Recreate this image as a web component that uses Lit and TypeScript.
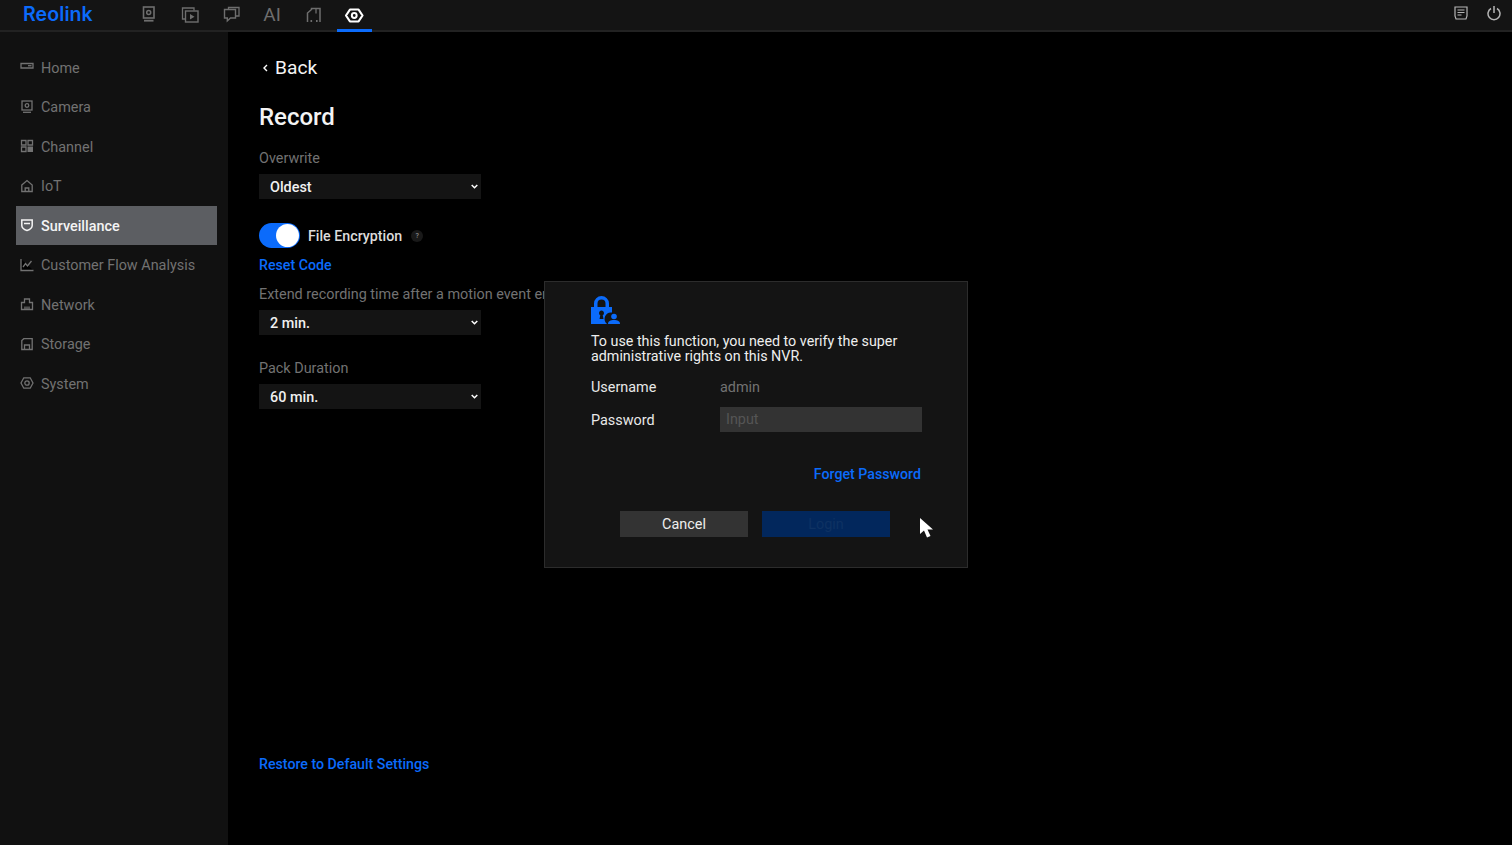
import { css, html, LitElement, svg } from 'lit';
import { customElement } from 'lit/decorators.js';

const topIcons = [
  svg`<rect x="4.5" y="3" width="10.500" height="11" fill="none" stroke-width="1.600"/><circle cx="9.700" cy="8.500" r="2" fill="none" stroke-width="1.500"/><path d="M5 16.700h9.500" stroke-width="1.800"/>`,
  svg`<path d="M14 6.500v-2.500H2.500v11h3" fill="none"/><rect x="5.500" y="7" width="12.500" height="11" fill="none" stroke-width="1.400"/><path d="M10 10v5.500l4.500-2.750z" fill="currentColor" stroke="none"/>`,
  svg`<path d="M7.500 5V3.500H18v8.500h-3.500" fill="none"/><path d="M3.500 5.500h11v8.500H9.500l-3.200 3v-3H3.500z" fill="none" stroke-width="1.400"/>`,
  null,
  svg`<path d="M4.500 18V9l4-3.500V4.500h8.500V18" fill="none" stroke-width="1.500"/><path d="M13 5v4.500" fill="none"/><path d="M7.500 17h1.600M13 17h1.600" stroke-width="1.800"/>`
];

const navIcons = [
  svg`<path d="M1 3.500h12v4.500H1z" fill="none"/><path d="M8 5.700h3.500"/>`,
  svg`<rect x="2" y="1" width="10" height="9" fill="none"/><circle cx="7" cy="5.500" r="1.800" fill="none"/><path d="M3 12.300h8"/>`,
  svg`<path d="M1.500 1.500h4.500v4.500h-4.500zM1.500 8h4.500v4.500h-4.500zM8 1.500h4.500v4.500H8z" fill="none"/><path d="M7.500 7.500H13V13H7.500z" fill="currentColor" stroke="none"/>`,
  svg`<path d="M1.800 6 7 1.500 12.200 6v6.500H1.800z" fill="none"/><path d="M5.200 12.500V9h3.600v3.500" fill="none"/>`,
  svg`<path d="M1.800 2h10.400v5.500c0 2.500-3 4.300-5.200 5-2.200-.7-5.200-2.500-5.200-5z" fill="none" stroke-width="1.500"/><path d="M4 5.500h6" stroke-width="1.500"/>`,
  svg`<path d="M1 1v11.500h12.500"/><path d="M3 9l2.500-3.500L7.500 8l4-5" fill="none"/>`,
  svg`<path d="M1.500 12.500V5.500h3V2h5v3.500h3v7z" fill="none"/><path d="M5 12.500V9.500M7 12.500V9.500M9 12.500V9.500"/>`,
  svg`<path d="M1.800 12.500v-9l2-1.800h8.400v10.800z" fill="none"/><path d="M4.500 12.500V8h5v4.500" fill="none"/>`,
  svg`<path d="M3.800 1.800h6.400L13 7l-2.800 5.200H3.800L1 7z" fill="none"/><circle cx="7" cy="7" r="2.200" fill="none"/>`
];

const navLabels = ['Home', 'Camera', 'Channel', 'IoT', 'Surveillance', 'Customer Flow Analysis', 'Network', 'Storage', 'System'];

@customElement('app-root')
export class AppRoot extends LitElement {
  static styles = css`
    :host {
      display: block;
      position: relative;
      width: 1512px;
      height: 845px;
      overflow: hidden;
      background: #000;
      color: #fff;
      font-family: Roboto, "Liberation Sans", sans-serif;
      font-size: 14.400px;
      letter-spacing: 0;
    }

    .topbar {
      display: flex;
      align-items: stretch;
      height: 30px;
      background: #141414;
      border-bottom: 2px solid #222;
    }

    .logo {
      width: 131px;
      flex: none;
      padding-left: 23px;
      box-sizing: border-box;
      color: #0b6bfb;
      font-family: Inter, sans-serif;
      font-size: 19.500px;
      font-weight: 600;
      line-height: 28px;
      letter-spacing: 0.100px;
    }

    .tabs {
      display: flex;
      gap: 6.200px;
    }

    .tab {
      display: flex;
      align-items: center;
      justify-content: center;
      width: 35px;
      height: 28px;
      color: #6e6e6e;
      font-size: 19px;
      font-weight: 400;
    }

    .tab svg {
      width: 20px;
      height: 20px;
      stroke: currentColor;
      stroke-width: 1.300;
    }

    .tab.active {
      height: 29px;
      padding-bottom: 0;
      color: #fff;
      border-bottom: 3px solid #0b6bfb;
    }

    .tools {
      display: flex;
      gap: 19px;
      margin-left: auto;
      padding: 5px 11px 0 0;
      color: #b5b5b5;
    }

    .tools svg {
      width: 14px;
      height: 16px;
      stroke: currentColor;
      stroke-width: 1.200;
      fill: none;
    }

    .body {
      display: flex;
      height: 813px;
    }

    .side {
      width: 228px;
      flex: none;
      box-sizing: border-box;
      padding: 16px 11px 0 16px;
      background: #111;
      color: #727272;
    }

    .nav {
      display: flex;
      align-items: center;
      gap: 7px;
      height: 39.500px;
      padding: 1px 0 0 4px;
      box-sizing: border-box;
      white-space: nowrap;
    }

    .nav svg {
      width: 14px;
      height: 14px;
      flex: none;
      margin-top: -2px;
      stroke: currentColor;
      stroke-width: 1.300;
    }

    .nav.active {
      height: 39px;
      margin-bottom: 0.500px;
      background: #5c5e62;
      color: #f4f4f4;
      font-weight: 500;
    }

    .main {
      flex: 1;
      display: flex;
      flex-direction: column;
      align-items: flex-start;
      padding: 23px 0 71px 31px;
      box-sizing: border-box;
      color: #727272;
    }

    .back {
      display: flex;
      align-items: center;
      gap: 7px;
      height: 25px;
      padding-left: 4px;
      color: #f4f4f4;
      font-size: 19.200px;
      font-weight: 400;
    }

    .back svg {
      width: 5px;
      height: 8px;
      fill: none;
      stroke: #fff;
      stroke-width: 1.400;
    }

    h1 {
      margin: 22px 0 16px;
      color: #f4f4f4;
      font-size: 24px;
      font-weight: 500;
      line-height: 30px;
    }

    .label {
      height: 20px;
      line-height: 22px;
      white-space: nowrap;
    }

    .field {
      margin-bottom: 23px;
    }

    .select {
      display: flex;
      align-items: center;
      justify-content: space-between;
      width: 222px;
      height: 25px;
      margin-top: 6px;
      padding: 1px 3px 0 11px;
      box-sizing: border-box;
      background: #141414;
      color: #f0f0f0;
      font-weight: 500;
    }

    .select svg {
      width: 7px;
      height: 5px;
      margin-top: -2px;
      fill: none;
      stroke: #fff;
      stroke-width: 1.500;
    }

    .switch-row {
      display: flex;
      align-items: center;
      height: 25px;
      margin-top: 1px;
      color: #dcdcdc;
      font-size: 14.250px;
      font-weight: 500;
    }

    .switch {
      display: flex;
      justify-content: flex-end;
      align-items: center;
      width: 41px;
      height: 25px;
      margin-right: 8px;
      padding-right: 1px;
      box-sizing: border-box;
      border-radius: 13px;
      background: #0b6bfb;
    }

    .knob {
      width: 23px;
      height: 23px;
      border-radius: 50%;
      background: #fff;
    }

    .help {
      display: flex;
      align-items: center;
      justify-content: center;
      width: 12px;
      height: 12px;
      margin-left: 9px;
      border-radius: 50%;
      background: #191919;
      color: #8a8a8a;
      font-size: 7px;
    }

    .link {
      color: #0b6bfb;
      font-size: 14.200px;
      font-weight: 500;
      line-height: 20px;
    }

    .reset {
      margin: 7px 0 9px;
    }

    .restore {
      margin-top: auto;
    }

    .modal {
      position: absolute;
      left: 544px;
      top: 281px;
      width: 424px;
      height: 287px;
      box-sizing: border-box;
      padding: 14px 46px 0;
      background: #141414;
      border: 1px solid #2c2c2c;
      display: flex;
      flex-direction: column;
    }

    .lock {
      width: 29px;
      height: 28px;
      display: block;
      flex: none;
      fill: #0b6bfb;
    }

    .msg {
      margin: 10px 0 0;
      width: 330px;
      font-size: 14.300px;
      line-height: 14.500px;
      color: #eee;
    }

    .form {
      display: grid;
      grid-template-columns: 129px 202px;
      grid-auto-rows: 27px;
      row-gap: 6px;
      align-items: center;
      margin-top: 11px;
      color: #e8e8e8;
    }

    .muted {
      color: #727272;
    }

    .input {
      height: 25px;
      margin-bottom: 3px;
      line-height: 26px;
      padding-left: 6px;
      background: #333;
      color: #555;
    }

    .forget {
      align-self: flex-end;
      margin: 30px 0 0;
    }

    .buttons {
      display: flex;
      gap: 14px;
      margin: 26.500px 0 0 29px;
    }

    .btn {
      width: 128px;
      height: 26px;
      line-height: 27px;
      text-align: center;
      background: #333;
      color: #eee;
    }

    .btn.login {
      background: #02275c;
      color: #0e3263;
    }

    .cursor {
      position: absolute;
      left: 919px;
      top: 517px;
      width: 15px;
      height: 22px;
    }
  `;

  private _select(label: string, value: string) {
    return html`
      <div class="field">
        <div class="label">${label}</div>
        <div class="select">
          ${value}
          <svg viewBox="0 0 7 5"><path d="M.7 1 3.500 3.800 6.300 1"></path></svg>
        </div>
      </div>
    `;
  }

  protected render() {
    return html`
      <header class="topbar">
        <div class="logo">Reolink</div>
        <nav class="tabs">
          ${topIcons.map((icon) => html`
            <div class="tab">${icon ? html`<svg viewBox="0 0 20 20">${icon}</svg>` : 'AI'}</div>
          `)}
          <div class="tab active">
            <svg viewBox="0 0 20 20">
              <path d="M2 10.500 6 4.500h8.500l4 6-4 6H6z" fill="none" stroke-width="2.200" stroke-linejoin="round"></path>
              <circle cx="10.250" cy="10.500" r="2.400" fill="none" stroke-width="2"></circle>
            </svg>
          </div>
        </nav>
        <div class="tools">
          <svg viewBox="0 0 14 16">
            <path d="M1 2h12v9l-1 3H2L1 11z"></path>
            <path d="M3.500 5h7M3.500 7.500h7M3.500 10h4"></path>
          </svg>
          <svg viewBox="0 0 14 16" style="stroke-width:1.500">
            <path d="M4 3.500a6 6 0 1 0 6 0M7 1v7"></path>
          </svg>
        </div>
      </header>
      <div class="body">
        <aside class="side">
          ${navLabels.map((label, i) => html`
            <div class="nav ${label === 'Surveillance' ? 'active' : ''}">
              <svg viewBox="0 0 14 14">${navIcons[i]}</svg>
              ${label}
            </div>
          `)}
        </aside>
        <main class="main">
          <div class="back">
            <svg viewBox="0 0 5 8"><path d="M4 1 1 4l3 3"></path></svg>
            Back
          </div>
          <h1>Record</h1>
          ${this._select('Overwrite', 'Oldest')}
          <div class="switch-row">
            <div class="switch"><div class="knob"></div></div>
            File Encryption
            <div class="help">?</div>
          </div>
          <div class="link reset">Reset Code</div>
          ${this._select('Extend recording time after a motion event ends', '2 min.')}
          ${this._select('Pack Duration', '60 min.')}
          <div class="link restore">Restore to Default Settings</div>
        </main>
      </div>
      <section class="modal">
        <svg class="lock" viewBox="0 0 29 28">
          <path fill-rule="evenodd" d="M0 11h3V7.500a7.500 7.500 0 0 1 15 0V11h3v5.500a6.500 6.500 0 0 0-5 11.500H0zM6.500 11h8V7.500a4 4 0 0 0-8 0zM10.500 14.500a2.500 2.500 0 0 0-1.200 4.700L8.500 23h4l-.8-3.800a2.500 2.500 0 0 0-1.200-4.700z"></path>
          <circle cx="23" cy="20.500" r="2.800"></circle>
          <path d="M17 28c0-3 2.500-4 6-4s6 1 6 4z"></path>
        </svg>
        <p class="msg">To use this function, you need to verify the super administrative rights on this NVR.</p>
        <div class="form">
          <div>Username</div>
          <div class="muted">admin</div>
          <div>Password</div>
          <div class="input">Input</div>
        </div>
        <div class="link forget">Forget Password</div>
        <div class="buttons">
          <div class="btn">Cancel</div>
          <div class="btn login">Login</div>
        </div>
      </section>
      <svg class="cursor" viewBox="0 0 15 22">
        <path d="M1 1v16l4-3.500 3 7 3.500-1.500-3-6.500H14z" fill="#fff"></path>
      </svg>
    `;
  }
}
